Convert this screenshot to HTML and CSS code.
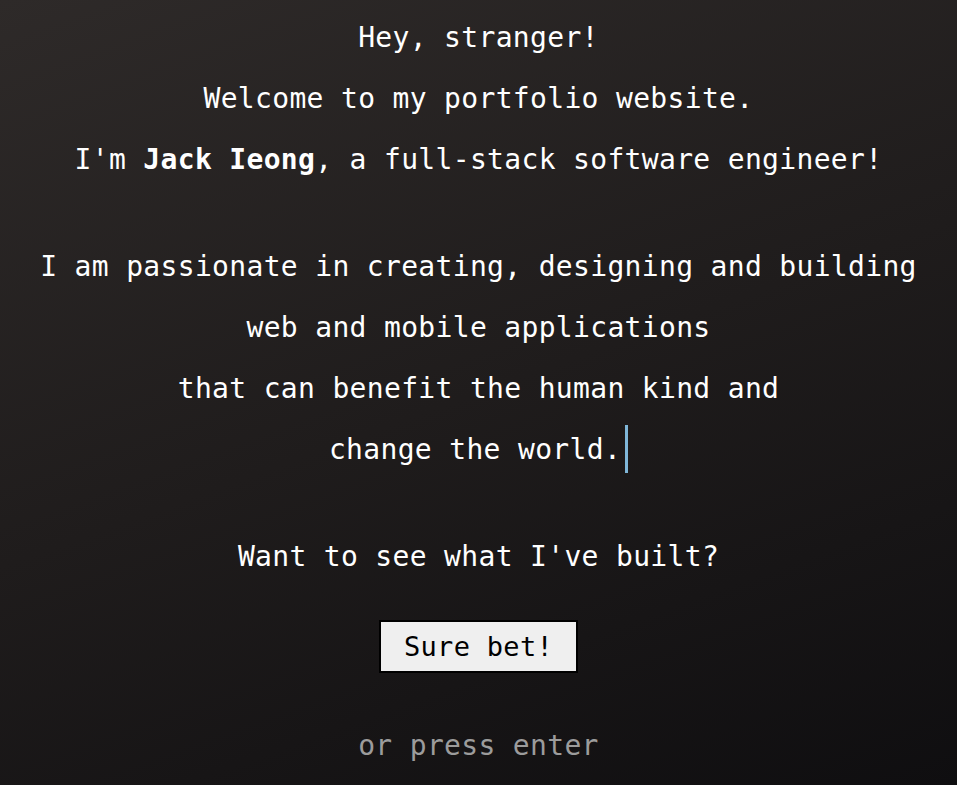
FILE: index.html
```html
<!DOCTYPE html>
<html lang="en">
<head>
<meta charset="utf-8">
<title>Jack Ieong</title>
<link rel="stylesheet" href="styles.css">
</head>
<body>
<main class="hero">
  <section class="group">
    <p class="line">Hey, stranger!</p>
    <p class="line">Welcome to my portfolio website.</p>
    <p class="line">I'm <strong>Jack Ieong</strong>, a full-stack software engineer!</p>
  </section>
  <section class="group">
    <p class="line">I am passionate in creating, designing and building</p>
    <p class="line">web and mobile applications</p>
    <p class="line">that can benefit the human kind and</p>
    <p class="line"><span class="typed">change the world.</span></p>
  </section>
  <section class="group">
    <p class="line">Want to see what I've built?</p>
  </section>
  <button class="cta" type="button">Sure bet!</button>
  <p class="hint">or press enter</p>
</main>
</body>
</html>
```

FILE: styles.css
```css
html, body {
  margin: 0;
  padding: 0;
  height: 100%;
}

body {
  background: linear-gradient(160deg, #2e2a29 0%, #1f1c1c 50%, #0f0e10 100%);
  color: #ffffff;
  font-family: "DejaVu Sans Mono", "Liberation Mono", monospace;
  font-size: 28px;
  letter-spacing: 0.33px;
  overflow: hidden;
}

.hero {
  display: flex;
  flex-direction: column;
  align-items: center;
  padding-top: 7px;
  gap: 46px;
}

.group {
  display: flex;
  flex-direction: column;
  align-items: center;
}

.line {
  margin: 0;
  line-height: 61px;
  text-align: center;
  white-space: nowrap;
}

.line strong {
  font-weight: bold;
}

.typed {
  border-right: 3px solid #7fb6d8;
  padding-right: 4px;
  padding-top: 8px;
  padding-bottom: 7px;
}

.cta {
  margin-top: -13px;
  font-family: inherit;
  font-size: 27px;
  letter-spacing: 0.3px;
  color: #000;
  background: #efefef;
  border: 2px solid #000;
  height: 53px;
  width: 199px;
  padding: 0;
  cursor: pointer;
}

.hint {
  margin: -4px 0 0;
  line-height: 61px;
  color: #9c9c9c;
}
```
